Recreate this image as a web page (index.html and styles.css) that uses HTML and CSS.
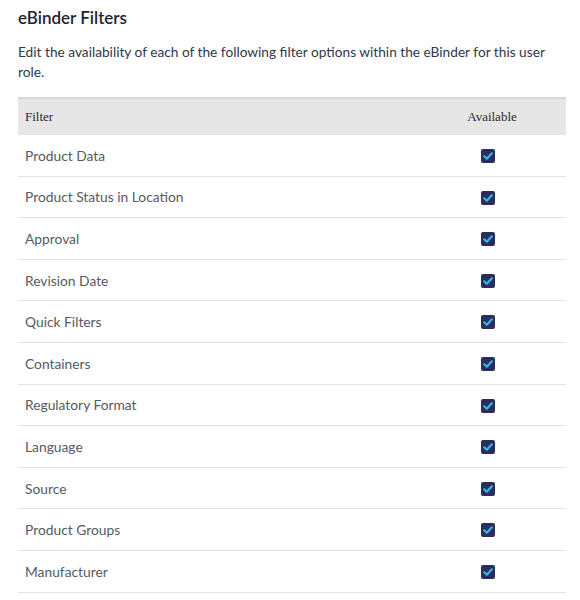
FILE: index.html
```html
<!DOCTYPE html>
<html>
<head>
<meta charset="utf-8">
<link rel="stylesheet" href="styles.css">
</head>
<body>
<div class="page">
  <h2 class="title">eBinder Filters</h2>
  <p class="desc">Edit the availability of each of the following filter options within the eBinder for this user role.</p>
  <table class="filters">
    <thead>
      <tr><th class="col-name">Filter</th><th class="col-avail">Available</th></tr>
    </thead>
    <tbody>
      <tr><td class="col-name">Product Data</td><td class="col-avail"><span class="cb"></span></td></tr>
      <tr><td class="col-name">Product Status in Location</td><td class="col-avail"><span class="cb"></span></td></tr>
      <tr><td class="col-name">Approval</td><td class="col-avail"><span class="cb"></span></td></tr>
      <tr><td class="col-name">Revision Date</td><td class="col-avail"><span class="cb"></span></td></tr>
      <tr><td class="col-name">Quick Filters</td><td class="col-avail"><span class="cb"></span></td></tr>
      <tr><td class="col-name">Containers</td><td class="col-avail"><span class="cb"></span></td></tr>
      <tr><td class="col-name">Regulatory Format</td><td class="col-avail"><span class="cb"></span></td></tr>
      <tr><td class="col-name">Language</td><td class="col-avail"><span class="cb"></span></td></tr>
      <tr><td class="col-name">Source</td><td class="col-avail"><span class="cb"></span></td></tr>
      <tr><td class="col-name">Product Groups</td><td class="col-avail"><span class="cb"></span></td></tr>
      <tr><td class="col-name">Manufacturer</td><td class="col-avail"><span class="cb"></span></td></tr>
    </tbody>
  </table>
</div>
</body>
</html>
```
FILE: styles.css
```css
html, body { margin: 0; padding: 0; background: #fff; }
.page {
  padding: 7px 14px 0 18px;
  font-family: Lato, "Open Sans", sans-serif;
}
.title {
  margin: 0;
  font-size: 17px;
  font-weight: 600;
  line-height: 22px;
  color: #1e2433;
}
.desc {
  margin: 13px 0 0;
  font-size: 13.7px;
  line-height: 20px;
  color: #30384a;
}
.filters {
  margin-top: 15px;
  width: 548px;
  border-collapse: collapse;
}
.filters thead th {
  background: #e6e6e6;
  border-top: 2px solid #d6d6db;
  height: 36px;
  padding: 0;
  font-family: "Liberation Serif", "Times New Roman", serif;
  font-weight: normal;
  font-size: 13px;
  color: #2a2a2a;
}
.filters th.col-name, .filters td.col-name {
  text-align: left;
  padding-left: 7px;
}
.filters .col-avail {
  width: 148px;
  text-align: center;
}
.filters tbody td {
  height: 40.6px;
  padding: 0;
  border-bottom: 1px solid #e4e4e6;
  font-size: 13.8px;
  color: #555a63;
}
.cb {
  display: inline-block;
  width: 14px;
  height: 14px;
  margin-right: 8px;
  vertical-align: middle;
  border-radius: 2px;
  background: #2b2d5c url("data:image/svg+xml;utf8,<svg xmlns='http://www.w3.org/2000/svg' viewBox='0 0 14 14'><path d='M3.2 7.3 L5.8 9.8 L10.9 4.3' fill='none' stroke='%2330b8ea' stroke-width='2.2' stroke-linecap='round' stroke-linejoin='round'/></svg>") center/14px 14px no-repeat;
  position: relative;
  top: -1px;
}
```
